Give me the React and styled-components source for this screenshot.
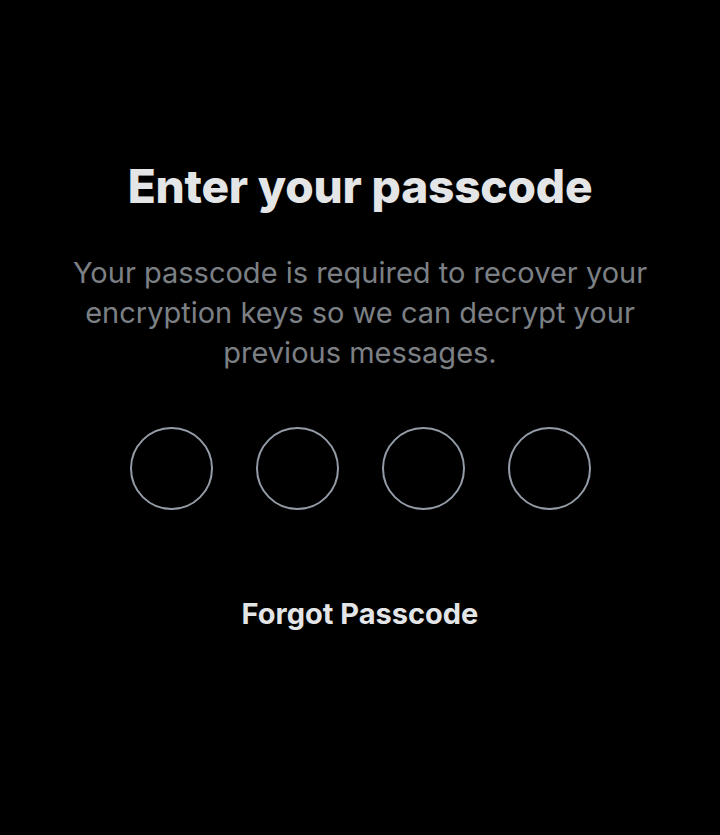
import React from 'react';
import styled, { createGlobalStyle } from 'styled-components';

const GlobalStyle = createGlobalStyle`
  html, body {
    margin: 0;
    padding: 0;
    background: #000;
  }
  body {
    font-family: "Inter", "Liberation Sans", sans-serif;
  }
`;

const Screen = styled.div`
  width: 720px;
  height: 835px;
  background: #000;
  display: flex;
  flex-direction: column;
  align-items: center;
  padding-top: 157px;
  box-sizing: border-box;
`;

const Title = styled.h1`
  margin: 0;
  color: #e4e5e6;
  font-size: 46px;
  font-weight: 800;
  line-height: 58px;
  letter-spacing: -0.2px;
`;

const Description = styled.p`
  margin: 38px 0 0;
  width: 620px;
  color: #7c8085;
  font-size: 29px;
  font-weight: 400;
  line-height: 40px;
  text-align: center;
`;

const Dots = styled.div`
  display: flex;
  gap: 43px;
  margin-top: 54px;
`;

const Dot = styled.div`
  width: 79px;
  height: 79px;
  border-radius: 50%;
  border: 2px solid ${p => (p.$filled ? '#e7e9ea' : '#939ca6')};
  background: ${p => (p.$filled ? '#e7e9ea' : 'transparent')};
`;

const ForgotLink = styled.button`
  margin-top: 86px;
  background: none;
  border: none;
  padding: 0;
  color: #e4e5e6;
  font-family: inherit;
  font-size: 29px;
  font-weight: 700;
  line-height: 36px;
  cursor: pointer;
`;

export default function App() {
  const digits = [false, false, false, false];
  return (
    <>
      <GlobalStyle />
      <Screen>
        <Title>Enter your passcode</Title>
        <Description>
          Your passcode is required to recover your encryption keys so we can decrypt your previous messages.
        </Description>
        <Dots>
          {digits.map((filled, i) => (
            <Dot key={i} $filled={filled} />
          ))}
        </Dots>
        <ForgotLink>Forgot Passcode</ForgotLink>
      </Screen>
    </>
  );
}
